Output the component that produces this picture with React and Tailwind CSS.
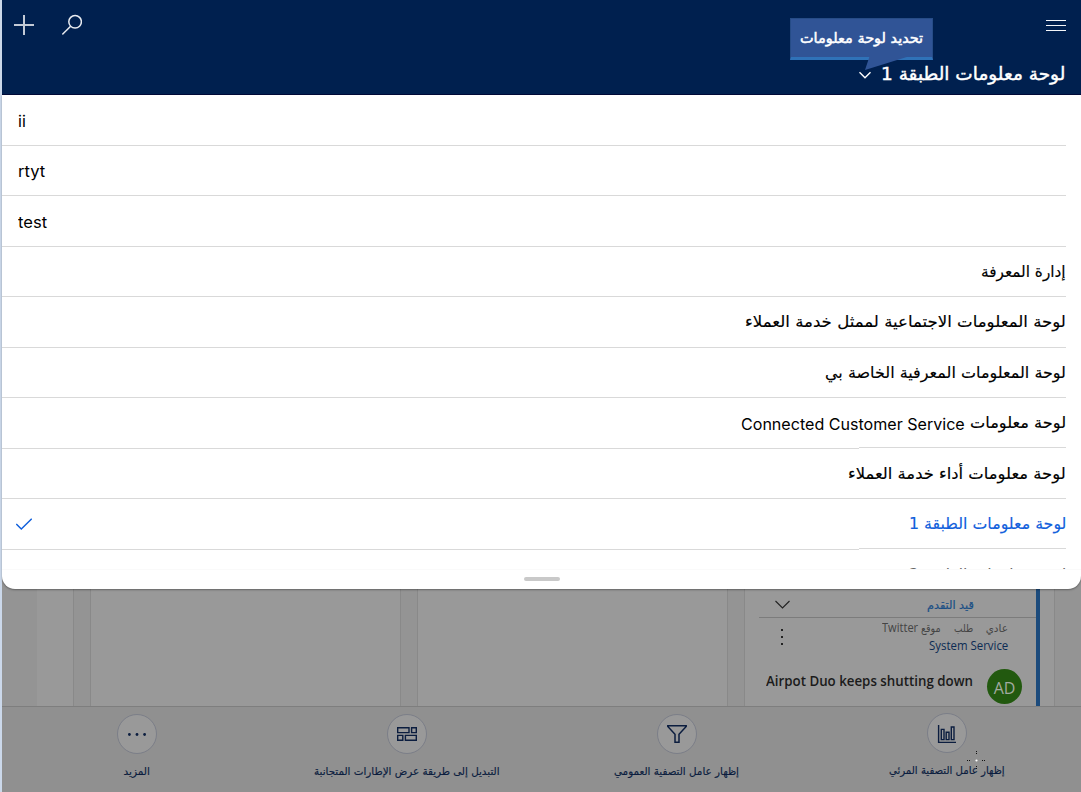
import { useLayoutEffect, useRef, useState } from "react";

const ARABIC = "font-['DejaVu_Sans','Noto_Sans',sans-serif]";
const LATIN = "font-['Inter','Liberation_Sans',sans-serif]";

// Scales a single line of text horizontally so that it occupies `width` pixels.
function Fit({ width, className = "", dir = "rtl", children }) {
  const ref = useRef(null);
  const [scale, setScale] = useState(1);
  useLayoutEffect(() => {
    setScale(width / ref.current.offsetWidth);
  }, [width]);
  return (
    <span
      dir={dir}
      className={"flex shrink-0 whitespace-nowrap " + className}
      style={{ width }}
    >
      <span
        ref={ref}
        className={"inline-block shrink-0 " + (dir === "rtl" ? "origin-right" : "origin-left")}
        style={{ transform: `scaleX(${scale})` }}
      >
        {children}
      </span>
    </span>
  );
}

const rows = [
  { text: "ii", w: 8, latin: true, h: "h-[51px]" },
  { text: "rtyt", w: 27, latin: true, h: "h-[50px]" },
  { text: "test", w: 29, latin: true, h: "h-[51px]" },
  { text: "إدارة المعرفة", w: 85, h: "h-[50px]" },
  { text: "لوحة المعلومات الاجتماعية لممثل خدمة العملاء", w: 321, h: "h-[51px]" },
  { text: "لوحة المعلومات المعرفية الخاصة بي", w: 241, h: "h-[50px]" },
  { text: "لوحة معلومات", w: 96, suffix: "Connected Customer Service", sw: 224, h: "h-[51px]", step: true },
  { text: "لوحة معلومات أداء خدمة العملاء", w: 218, h: "h-[50px]" },
  { text: "لوحة معلومات الطبقة 1", w: 157, h: "h-[51px]", selected: true, step: true },
];

function Row({ row }) {
  return (
    <li className={"flex flex-col " + row.h}>
      <div
        className={
          "flex flex-1 items-center gap-[5px] pr-[15px] " +
          (row.selected ? "pl-[14px] text-[#1160dc]" : "pl-4 text-black")
        }
        dir={row.latin ? "ltr" : "rtl"}
      >
        {row.latin ? (
          <Fit dir="ltr" width={row.w} className={"pt-px text-[16px] leading-6 " + LATIN}>
            {row.text}
          </Fit>
        ) : (
          <Fit width={row.w} className={"text-[16px] leading-6 [-webkit-text-stroke:0.15px] " + ARABIC}>
            {row.text}
          </Fit>
        )}
        {row.suffix && (
          <Fit dir="ltr" width={row.sw} className={"pt-px text-[16px] leading-6 " + LATIN}>
            {row.suffix}
          </Fit>
        )}
        {row.selected && (
          <svg className="mr-auto h-4 w-4" viewBox="0 0 16 16" fill="none" stroke="#1160dc" strokeWidth="1.4">
            <path d="M.3 8 5.3 13 15.7 2.7" />
          </svg>
        )}
      </div>
      <div className="mr-[15px] flex h-px">
        <div className="w-[857px] bg-[#d9d9d9]" />
        <div className={"flex-1 bg-[#d9d9d9] " + (row.step ? "-mt-px mb-px" : "")} />
      </div>
    </li>
  );
}

function Tool({ label, w, className = "", children }) {
  return (
    <div className={"flex w-[270px] flex-col items-center text-[#0b1d3f] " + className}>
      <div className="flex h-10 w-10 items-center justify-center rounded-full border border-[#7b7e88] bg-[#999]">
        {children}
      </div>
      <Fit width={w} className={"mt-[9px] text-[10.5px] leading-4 [-webkit-text-stroke:0.15px] " + ARABIC}>
        {label}
      </Fit>
    </div>
  );
}

export default function App() {
  return (
    <div className="flex h-[792px] w-[1081px] overflow-hidden bg-[#999]">
      <div className="w-0.5 shrink-0 bg-[#cbd8ea]" />
      <div className="flex w-[1079px] flex-col">
        <header className="relative flex h-[95px] justify-between border-b border-[#000a38] bg-[#00204f]">
          <div className="flex items-start gap-7 pl-3 pt-[14px]">
            <svg className="h-[22px] w-5" viewBox="0 0 20 22" fill="none" stroke="#c3cad6" strokeWidth="2">
              <path d="M0 11H20M10 1V21" />
            </svg>
            <svg className="h-[22px] w-5" viewBox="0 0 20 22" fill="none" stroke="#e8ebf0" strokeWidth="1.5">
              <circle cx="13.1" cy="7.8" r="6.3" />
              <path d="M.3 20.4 8.6 12.3" />
            </svg>
          </div>
          <div className="flex flex-col items-end pr-[15px]">
            <svg className="mt-[19px] h-[14px] w-5" viewBox="0 0 20 14" stroke="#f4f6f9" strokeWidth="1.2">
              <path d="M0 1.5H20M0 6.5H20M0 11.5H20" />
            </svg>
            <div className="mt-[27px] flex items-center gap-[10px] pr-px" dir="rtl">
              <Fit width={184} className={"text-[18px] leading-7 text-white [-webkit-text-stroke:0.45px_white] " + ARABIC}>
                لوحة معلومات الطبقة 1
              </Fit>
              <svg className="mt-[2px] h-3 w-3" viewBox="0 0 12 12" fill="none" stroke="#fff" strokeWidth="1.4">
                <path d="M.5 3.2 6 8.7 11.5 3.2" />
              </svg>
            </div>
          </div>
          <div className="absolute left-[788px] top-[18px] h-[52px] w-[143px]">
            <div className="flex h-[42px] items-center justify-center border border-b-[3px] border-[#264c87] border-b-[#2f72b8] bg-[#305496] text-white">
              <Fit width={123} className={"text-[14px] leading-5 [-webkit-text-stroke:0.5px_white] " + ARABIC}>
                تحديد لوحة معلومات
              </Fit>
            </div>
            <svg className="-mt-[5px] block h-4 w-[143px]" viewBox="0 0 143 16">
              <path d="M80 0H120V1L75 15Z" fill="#305496" />
            </svg>
          </div>
        </header>

        <main className="h-[494px] bg-[#949494]">
          <div className="relative flex h-full flex-col overflow-hidden rounded-b-[13px] bg-white shadow-[0_1px_2px_rgba(0,0,0,0.35)]">
            <ul>
              {rows.map((row) => (
                <Row key={row.text} row={row} />
              ))}
            </ul>
            <div className="h-5 overflow-hidden border-b border-[#fafafa] pr-[15px] pt-[13px] text-[#666]" dir="ltr">
              <div className="flex justify-end">
                <Fit width={157} className={"text-[16px] leading-6 " + ARABIC}>
                  لوحة معلومات الطبقة 2
                </Fit>
              </div>
            </div>
            <div className="mx-auto mt-[7px] h-1 w-9 rounded-full bg-[#c9c9c9]" />
          </div>
        </main>

        <section className="flex h-[117px] bg-[#949494]">
          <div className="ml-[35px] w-[37px] border-r border-[#898989] bg-[#999]" />
          <div className="ml-4 w-[311px] border-x border-[#898989] bg-[#999]" />
          <div className="ml-4 w-[311px] border-x border-[#898989] bg-[#999]" />
          <div className="ml-4 flex w-[311px] border-x border-[#898989] bg-[#999]">
            <div className="ml-[14px] flex w-[277px] flex-col">
              <div className="flex h-[29px] items-center justify-between border-b border-[#7c7c7c] pl-4 pr-[62px]">
                <svg className="mt-1 h-3 w-[15px]" viewBox="0 0 15 12" fill="none" stroke="#222" strokeWidth="1.1">
                  <path d="M.5 2 7.5 9 14.5 2" />
                </svg>
                <Fit width={47} className={"mt-[4px] text-[11.5px] leading-4 text-[#184e85] [-webkit-text-stroke:0.2px] " + ARABIC}>
                  قيد التقدم
                </Fit>
              </div>
              <div className="flex justify-between pl-[22px] pr-[28px] pt-[2px]">
                <div className="mt-[9px] flex w-0.5 flex-col gap-[5px]">
                  <i className="h-0.5 w-0.5 bg-[#222]" />
                  <i className="h-0.5 w-0.5 bg-[#222]" />
                  <i className="h-0.5 w-0.5 bg-[#222]" />
                </div>
                <div className="flex flex-col items-end">
                  <div className="flex items-center text-[10.5px] leading-4 text-[#444]" dir="rtl">
                    <Fit width={22} className={ARABIC}>عادي</Fit>
                    <Fit width={19} className={"mr-[13px] " + ARABIC}>طلب</Fit>
                    <Fit width={20} className={"mr-[13px] " + ARABIC}>موقع</Fit>
                    <Fit dir="ltr" width={36} className="mr-[3px] font-['Open_Sans',sans-serif] text-[12px]">
                      Twitter
                    </Fit>
                  </div>
                  <Fit dir="ltr" width={79} className="mt-[2px] font-['Open_Sans',sans-serif] text-[12px] leading-4 text-[#0c2b54]">
                    System Service
                  </Fit>
                </div>
              </div>
              <div className="mt-[15px] flex justify-end gap-[14px] pr-[14px]">
                <Fit dir="ltr" width={207} className="mt-[2px] font-['Open_Sans',sans-serif] text-[13.5px] font-semibold leading-5 text-[#1b1b1b]">
                  Airpot Duo keeps shutting down
                </Fit>
                <div className="flex h-[35px] w-[35px] shrink-0 items-center justify-center rounded-full bg-[#22590f] pt-0.5 font-['Open_Sans',sans-serif] text-[16px] text-[#a3aaa0]">
                  AD
                </div>
              </div>
            </div>
            <div className="w-1 bg-[#1c4b7c]" />
          </div>
        </section>

        <footer className="relative flex h-[86px] border-t border-[#7e7e7e] bg-[#909090] pt-[7px]">
          <Tool label="المزيد" w={26}>
            <svg className="h-[18px] w-5" viewBox="0 0 20 18" fill="currentColor">
              <circle cx="2.4" cy="9.5" r="1.4" />
              <circle cx="10" cy="9.5" r="1.4" />
              <circle cx="17.6" cy="9.5" r="1.4" />
            </svg>
          </Tool>
          <Tool label="التبديل إلى طريقة عرض الإطارات المتجانبة" w={186}>
            <svg className="h-[14px] w-5" viewBox="0 0 20 14" fill="none" stroke="currentColor" strokeWidth="1.4">
              <path d="M.7.7H12V5.6H.7ZM14.6.7H19.3V5.6H14.6ZM.7 8.4H5.8V13.3H.7ZM8.4 8.4H19.3V13.3H8.4Z" />
            </svg>
          </Tool>
          <Tool label="إظهار عامل التصفية العمومي" w={125} className="pl-px">
            <svg className="h-5 w-5" viewBox="0 0 20 20" fill="none" stroke="currentColor" strokeWidth="1.5">
              <path d="M.8 1.7H19.2V2.4L12 10.3V18.3H8V10.3L.8 2.4Z" />
            </svg>
          </Tool>
          <Tool label="إظهار عامل التصفية المرئي" w={116} className="-mt-px pl-px">
            <svg className="mt-0.5 h-5 w-5" viewBox="0 0 20 20" fill="none" stroke="currentColor" strokeWidth="1.4">
              <path d="M1.6 1V18.4H19M4.3 5.4H7V15.6H4.3ZM9.2 8.2H12V15.6H9.2ZM14.3 3H17V15.6H14.3Z" />
            </svg>
          </Tool>
          <svg className="absolute left-[964px] top-[43px] h-5 w-5" viewBox="0 0 20 20">
            <path d="M10.5 1V5M10.5 16V20M1 10.5H5M16 10.5H20" stroke="#111" strokeWidth="1" strokeDasharray="1 1" />
            <circle cx="10.5" cy="10.5" r="1.1" fill="#fff" />
          </svg>
        </footer>
      </div>
    </div>
  );
}
